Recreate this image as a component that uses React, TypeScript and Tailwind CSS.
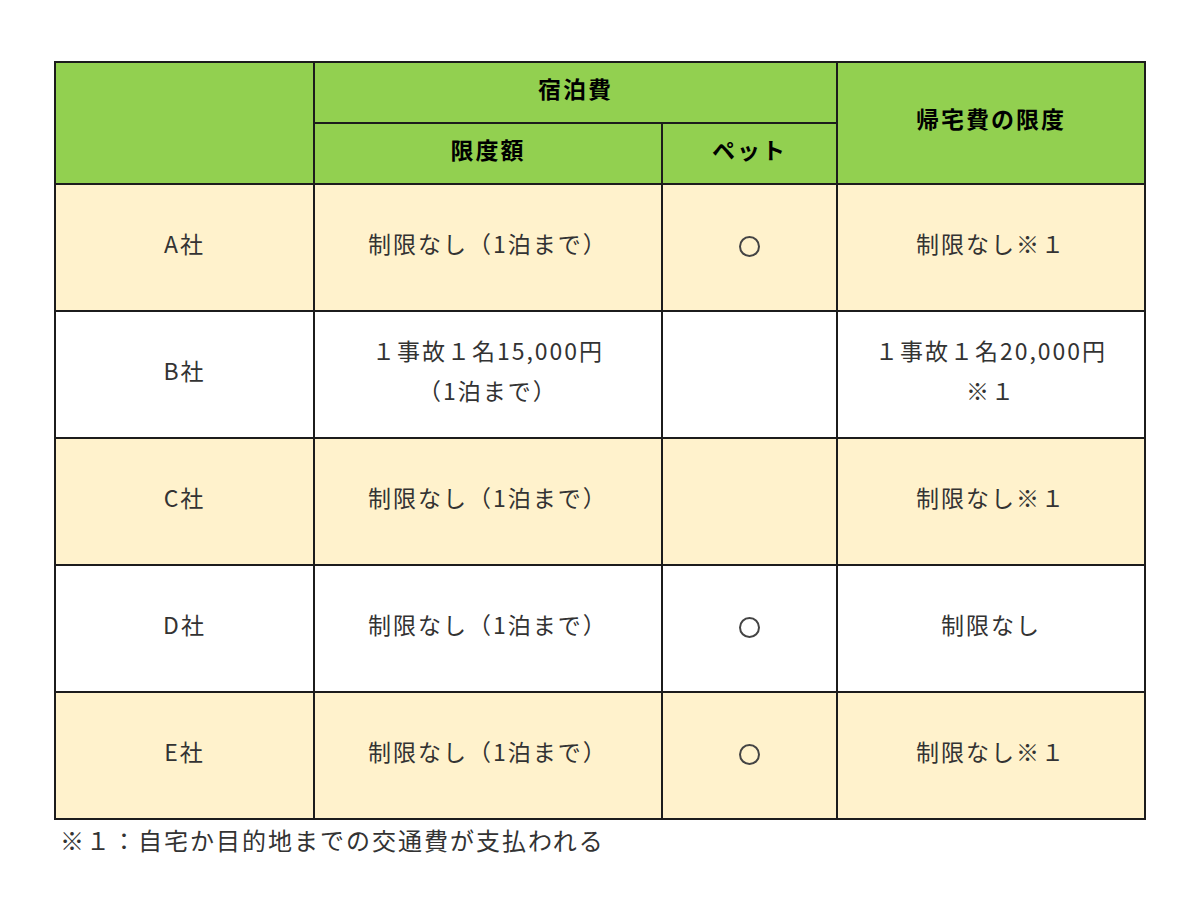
const rows = [
  { name: 'A社', limit: ['制限なし（1泊まで）'], pet: true, home: ['制限なし※１'], tint: true },
  { name: 'B社', limit: ['１事故１名15,000円', '（1泊まで）'], pet: false, home: ['１事故１名20,000円', '※１'], tint: false },
  { name: 'C社', limit: ['制限なし（1泊まで）'], pet: false, home: ['制限なし※１'], tint: true },
  { name: 'D社', limit: ['制限なし（1泊まで）'], pet: true, home: ['制限なし'], tint: false },
  { name: 'E社', limit: ['制限なし（1泊まで）'], pet: true, home: ['制限なし※１'], tint: true },
];

const cell = 'border-2 border-[#1c1c1c] text-center align-middle pb-[10px]';

export default function App() {
  return (
    <div
      className="w-[1200px] h-[900px] bg-white pt-[61px] pl-[54px] text-[#333]"
      style={{ fontFamily: '"Noto Sans CJK JP", "Noto Sans", sans-serif' }}
    >
      <table className="border-collapse w-[1090px] table-fixed text-[23px] tracking-[2px] leading-[40px]">
        <colgroup>
          <col className="w-[259px]" />
          <col className="w-[348px]" />
          <col className="w-[175px]" />
          <col className="w-[308px]" />
        </colgroup>
        <thead className="bg-[#92d050] text-black font-bold">
          <tr className="h-[61px]">
            <th rowSpan={2} className={cell}></th>
            <th colSpan={2} className={cell}>宿泊費</th>
            <th rowSpan={2} className={cell}>帰宅費の限度</th>
          </tr>
          <tr className="h-[61px]">
            <th className={cell}>限度額</th>
            <th className={cell}>ペット</th>
          </tr>
        </thead>
        <tbody>
          {rows.map((r) => (
            <tr key={r.name} className={`h-[127px] ${r.tint ? 'bg-[#fff2cc]' : 'bg-white'}`}>
              <td className={cell}>{r.name}</td>
              <td className={cell}>
                {r.limit.map((t) => (
                  <div key={t}>{t}</div>
                ))}
              </td>
              <td className={cell}>
                {r.pet && <span className="inline-block w-[21px] h-[21px] rounded-full border-2 border-[#444] align-middle" />}
              </td>
              <td className={cell}>
                {r.home.map((t) => (
                  <div key={t}>{t}</div>
                ))}
              </td>
            </tr>
          ))}
        </tbody>
      </table>
      <p className="text-[24px] tracking-[2px] leading-[40px] pl-[6px]">※１：自宅か目的地までの交通費が支払われる</p>
    </div>
  );
}
